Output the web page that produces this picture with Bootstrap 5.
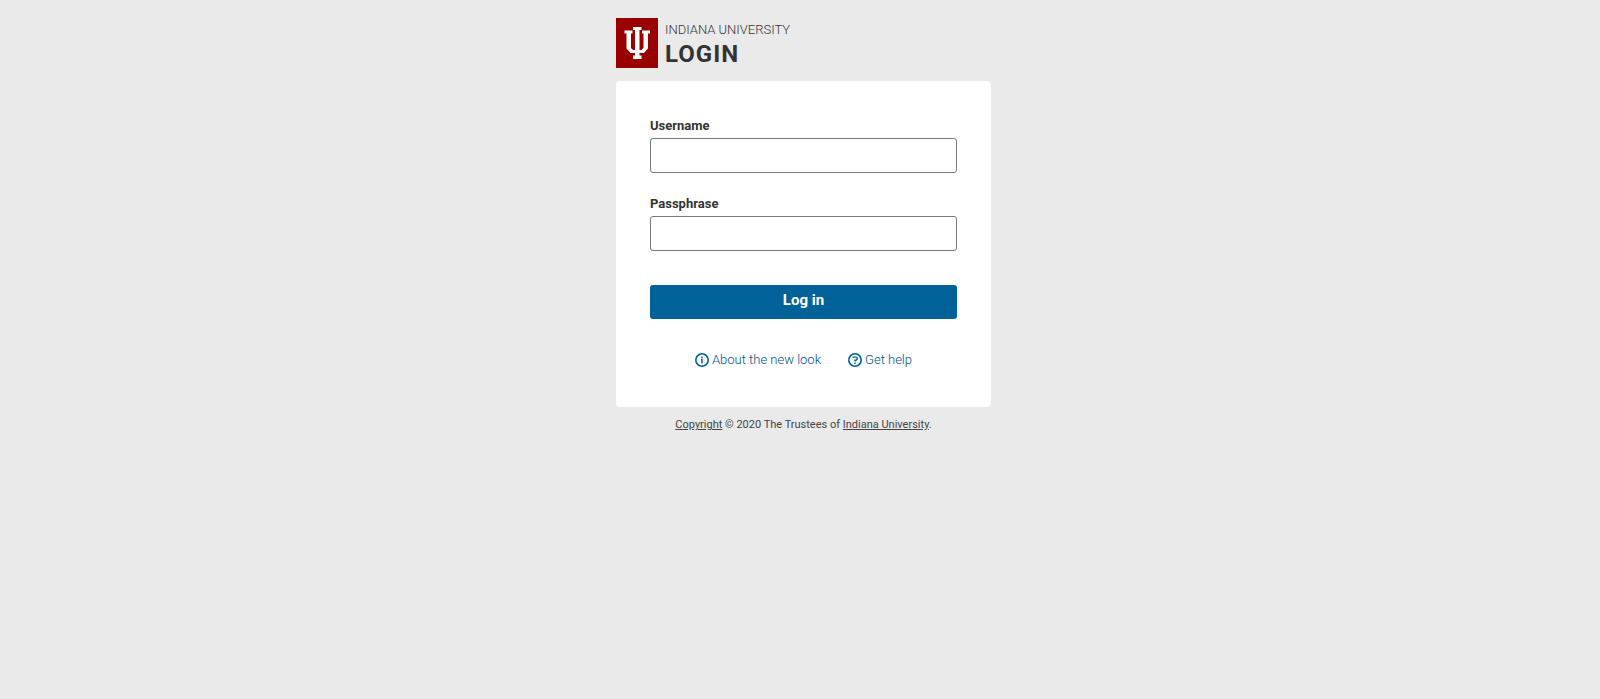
<!DOCTYPE html>
<html lang="en">
<head>
<meta charset="utf-8">
<meta name="viewport" content="width=device-width, initial-scale=1">
<title>Indiana University Login</title>
<link href="https://cdn.jsdelivr.net/npm/bootstrap@5.3.0/dist/css/bootstrap.min.css" rel="stylesheet">
<style>
  body { background: #eaeaea; color: #333; font-family: Roboto, "Liberation Sans", sans-serif; font-size: 13px; line-height: 20px; padding-left: 7px; }
  .login-wrap { max-width: 375px; padding-top: 18px; }
  .brand { gap: 7px; margin-bottom: 13px; }
  .brand-campus { padding-top: 2px; font-weight: 300; }
  .brand-title { font-size: 24px; line-height: 28px; font-weight: 700; letter-spacing: 1px; }
  .login-box { background: #fff; border-radius: 4px; padding: 35px 34px 37px; }
  .field { margin-bottom: 21px; }
  .field label { font-weight: 700; margin-bottom: 2px; }
  .field .form-control { height: 35px; border: 1px solid #777; border-radius: 3px; padding: 4px 8px; font-size: 14px; }
  .btn-login { background: #006298; color: #fff; height: 34px; border: 0; border-radius: 3px; font-size: 15px; font-weight: 700; line-height: 20px; padding: 5px 8px 9px; margin-top: 34px; }
  .btn-login:hover { background: #004f7a; color: #fff; }
  .help-links { gap: 27px; margin-top: 31px; }
  .help-links a { color: #006298; gap: 3px; font-weight: 300; text-decoration: none; }
  .help-links span { color: #00508a; }
  .copy { font-size: 11px; margin-top: 8px; }
  .copy, .copy a { color: #444; }
</style>
</head>
<body>
<div class="login-wrap mx-auto">
  <header class="brand d-flex align-items-center">
    <svg width="42" height="50" viewBox="0 0 42 50" role="img" aria-label="Indiana University trident">
      <path fill="#900" d="M0 0h42v50H0z"/>
      <path fill="#fff" d="M17 9h8.500v3h-2v20h2l2-2V15.500h-1.500v-3h8v3h-2V30.500L28 35h-4.500v2.500h2v3.500H17v-3.500h2V35h-4.500L10.500 30.500V15.500h-2v-3h8v3H15V30l2 2h2V12h-2z"/>
    </svg>
    <div>
      <div class="brand-campus">INDIANA UNIVERSITY</div>
      <h1 class="brand-title mb-0">LOGIN</h1>
    </div>
  </header>
  <main class="login-box">
    <form>
      <div class="field">
        <label class="d-block" for="username">Username</label>
        <input class="form-control" type="text" id="username" autocomplete="username">
      </div>
      <div class="field mb-0">
        <label class="d-block" for="passphrase">Passphrase</label>
        <input class="form-control" type="password" id="passphrase" autocomplete="current-password">
      </div>
      <button class="btn btn-login w-100" type="submit">Log in</button>
    </form>
    <nav class="help-links d-flex justify-content-center" aria-label="Help">
      <a class="d-flex align-items-center" href="#about">
        <svg width="14" height="14" viewBox="0 0 14 14" fill="none" stroke="currentColor" aria-hidden="true">
          <circle cx="7" cy="7" r="6.200" stroke-width="1.600"/>
          <path d="M7 3.500v1.500M6 6.500h1v4" stroke-width="1.500"/>
        </svg>
        <span>About the new look</span>
      </a>
      <a class="d-flex align-items-center" href="#help">
        <svg width="14" height="14" viewBox="0 0 14 14" fill="none" stroke="currentColor" aria-hidden="true">
          <circle cx="7" cy="7" r="6.200" stroke-width="1.600"/>
          <path d="M4.500 4.100h3.400q1.400 0 1.400 1.500T7.800 7.200H7v1.300M7 9.600v1.500" stroke-width="1.400"/>
        </svg>
        <span>Get help</span>
      </a>
    </nav>
  </main>
  <footer class="copy text-center"><a href="#copyright">Copyright</a> © 2020 The Trustees of <a href="#iu">Indiana University</a>.</footer>
</div>
<script src="https://cdn.jsdelivr.net/npm/bootstrap@5.3.0/dist/js/bootstrap.bundle.min.js"></script>
</body>
</html>
